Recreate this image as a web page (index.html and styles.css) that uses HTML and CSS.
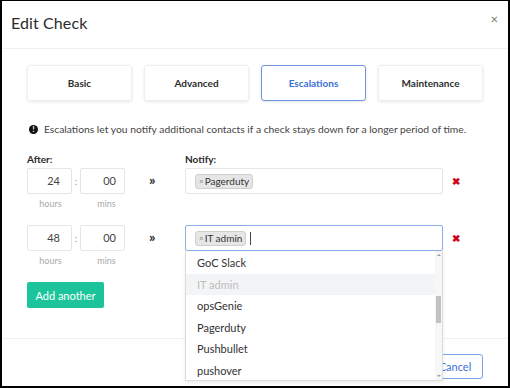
FILE: index.html
```html
<!DOCTYPE html>
<html lang="en">
<head>
  <meta charset="UTF-8">
  <title>Edit Check</title>
  <link rel="stylesheet" href="styles.css">
</head>
<body>
  <div class="modal">
    <header class="modal-header">
      <h1 class="modal-title">Edit Check</h1>
      <span class="close">&times;</span>
    </header>
    <section class="modal-body">
      <nav class="tabs">
        <div class="tab">Basic</div>
        <div class="tab">Advanced</div>
        <div class="tab tab-active">Escalations</div>
        <div class="tab">Maintenance</div>
      </nav>
      <p class="info"><span class="info-icon">!</span>Escalations let you notify additional contacts if a check stays down for a longer period of time.</p>

      <div class="labels">
        <span class="label">After:</span>
        <span class="label label-notify">Notify:</span>
      </div>

      <!-- fila 1 -->
      <div class="row">
        <div class="time-box">24</div>
        <span class="colon">:</span>
        <div class="time-box">00</div>
        <span class="arrow">&raquo;</span>
        <div class="select">
          <span class="chip"><span class="chip-x">&times;</span>Pagerduty</span>
        </div>
        <span class="remove">&#10006;</span>
      </div>
      <div class="units">
        <span>hours</span><span></span><span>mins</span>
      </div>

      <!-- fila 2 -->
      <div class="row row-second">
        <div class="time-box">48</div>
        <span class="colon">:</span>
        <div class="time-box">00</div>
        <span class="arrow">&raquo;</span>
        <div class="select select-focus">
          <span class="chip"><span class="chip-x">&times;</span>IT admin</span>
          <span class="caret"></span>
          <ul class="dropdown">
            <li>GoC Slack</li>
            <li class="disabled">IT admin</li>
            <li>opsGenie</li>
            <li>Pagerduty</li>
            <li>Pushbullet</li>
            <li>pushover</li>
            <span class="scrollbar">
              <span class="scroll-up"></span>
              <span class="scroll-thumb"></span>
              <span class="scroll-down"></span>
            </span>
          </ul>
        </div>
        <span class="remove">&#10006;</span>
      </div>
      <div class="units">
        <span>hours</span><span></span><span>mins</span>
      </div>

      <button class="button-add">Add another</button>
    </section>
    <footer class="modal-footer">
      <button class="button-cancel">Cancel</button>
    </footer>
  </div>
</body>
</html>
```

FILE: styles.css
```css
:root {
  --color-text: #333333;
  --color-muted: #a8a8a8;
  --color-border: #e6e6e6;
  --color-blue: #3b6fd6;
  --color-green: #1cc49c;
  --color-red: #d0021b;
}
* {
  margin: 0;
  padding: 0;
  box-sizing: border-box;
}
body {
  font-family: "Lato", "Noto Sans", sans-serif;
  color: var(--color-text);
  background: #fff;
}
.modal {
  width: 510px;
  height: 388px;
  border: 2px solid #000;
  border-top-width: 1px;
  display: flex;
  flex-direction: column;
  overflow: hidden;
}
.modal-header {
  height: 48px;
  flex: none;
  display: flex;
  justify-content: space-between;
  align-items: center;
  padding: 0 10px 4px 9px;
  border-bottom: 1px solid #f0f0f0;
}
.modal-title {
  font-size: 16px;
  font-weight: 400;
  color: #2b2b2b;
  letter-spacing: 0.1px;
}
.close {
  font-size: 13px;
  color: #777;
  margin-top: -8px;
}
.modal-body {
  height: 289px;
  flex: none;
  padding: 16px 25px 0;
}
.tabs {
  display: grid;
  grid-template-columns: repeat(4, 105px);
  gap: 12px;
}
.tab {
  height: 36px;
  display: flex;
  align-items: center;
  justify-content: center;
  font-size: 10px;
  font-weight: 700;
  color: #2e2e2e;
  border: 1px solid #eeeeee;
  border-radius: 3px;
  box-shadow: 0 1px 3px rgba(0, 0, 0, 0.1);
}
.tab-active {
  color: var(--color-blue);
  border-color: #6f95e0;
}
.info {
  margin-top: 22px;
  font-size: 10.3px;
  line-height: 12px;
  color: #444;
  display: flex;
  align-items: center;
  white-space: nowrap;
}
.info-icon {
  display: inline-block;
  flex: none;
  width: 9px;
  height: 9px;
  border-radius: 50%;
  background: #111;
  color: #fff;
  font-size: 7px;
  font-weight: 900;
  line-height: 9px;
  text-align: center;
  margin: 0 6px 0 2px;
}
.labels {
  margin-top: 18px;
  display: grid;
  grid-template-columns: 158px 1fr;
  line-height: 12px;
}
.label {
  font-size: 10px;
  font-weight: 700;
  color: #2a2a2a;
}
.row {
  margin-top: 3px;
  display: grid;
  grid-template-columns: 45px 8px 45px 60px 258px 1fr;
  align-items: center;
  height: 26px;
}
.row-second {
  margin-top: 15px;
}
.time-box {
  height: 26px;
  border: 1px solid var(--color-border);
  border-radius: 2px;
  font-size: 11px;
  line-height: 24px;
  text-align: right;
  padding-right: 11px;
  color: #444;
}
.time-box + .colon + .time-box {
  padding-right: 8px;
}
.colon {
  text-align: center;
  font-size: 10px;
  color: #999;
}
.arrow {
  font-size: 14px;
  font-weight: 900;
  padding-left: 24px;
  margin-top: -3px;
}
.select {
  position: relative;
  height: 26px;
  border: 1px solid var(--color-border);
  border-radius: 2px;
  display: flex;
  align-items: center;
  padding-left: 9px;
}
.select-focus {
  border-color: #8aaee8;
}
.chip {
  display: inline-flex;
  align-items: center;
  height: 15px;
  padding: 0 3px 0 3px;
  background: #e6e6e6;
  border: 1px solid #cfcfcf;
  border-radius: 3px;
  font-size: 10px;
  color: #333;
}
.chip-x {
  font-size: 8px;
  color: #888;
  margin-right: 1px;
}
.caret {
  width: 1px;
  height: 13px;
  background: #444;
  margin-left: 4px;
}
.remove {
  text-align: center;
  color: var(--color-red);
  font-size: 10px;
  font-weight: 900;
  padding-right: 14px;
}
.units {
  margin-top: 4px;
  display: grid;
  grid-template-columns: 45px 8px 45px;
  line-height: 12px;
  font-size: 9px;
  color: var(--color-muted);
  text-align: center;
}
.units span:first-child {
  padding-left: 2px;
}
.units span:last-child {
  padding-left: 8px;
}
.dropdown {
  position: absolute;
  top: 25px;
  left: -1px;
  width: 258px;
  height: 130px;
  background: #fff;
  border: 1px solid #dcdcdc;
  border-top: none;
  box-shadow: 0 2px 4px rgba(0, 0, 0, 0.08);
  list-style: none;
  padding-top: 1px;
  overflow: hidden;
  z-index: 2;
}
.dropdown li {
  height: 21.5px;
  line-height: 21.5px;
  padding-left: 11px;
  margin-right: 7px;
  font-size: 11px;
  color: #333;
}
.dropdown li.disabled {
  background: #f3f4f5;
  color: #bdbdbd;
}
.scrollbar {
  position: absolute;
  top: 0;
  right: 0;
  width: 7px;
  height: 100%;
  background: #f7f7f7;
}
.scroll-thumb {
  position: absolute;
  left: 1px;
  top: 45px;
  width: 5px;
  height: 27px;
  background: #c2c2c2;
}
.scroll-up,
.scroll-down {
  position: absolute;
  left: 2px;
  width: 0;
  height: 0;
  border-left: 2px solid transparent;
  border-right: 2px solid transparent;
}
.scroll-up {
  top: 3px;
  border-bottom: 2px solid #999;
}
.scroll-down {
  bottom: 3px;
  border-top: 2px solid #999;
}
.button-add {
  margin-top: 15px;
  width: 77px;
  height: 26px;
  border: none;
  border-radius: 2px;
  background: var(--color-green);
  color: #fff;
  font-family: inherit;
  font-size: 11px;
}
.modal-footer {
  flex: 1;
  border-top: 1px solid #f0f0f0;
  display: flex;
  justify-content: flex-end;
  align-items: flex-start;
  padding: 15px 25px 0 0;
}
.button-cancel {
  width: 56px;
  height: 25px;
  border: 1px solid #7aa2e6;
  border-radius: 3px;
  background: #fff;
  color: var(--color-blue);
  font-family: inherit;
  font-size: 11px;
}
```
